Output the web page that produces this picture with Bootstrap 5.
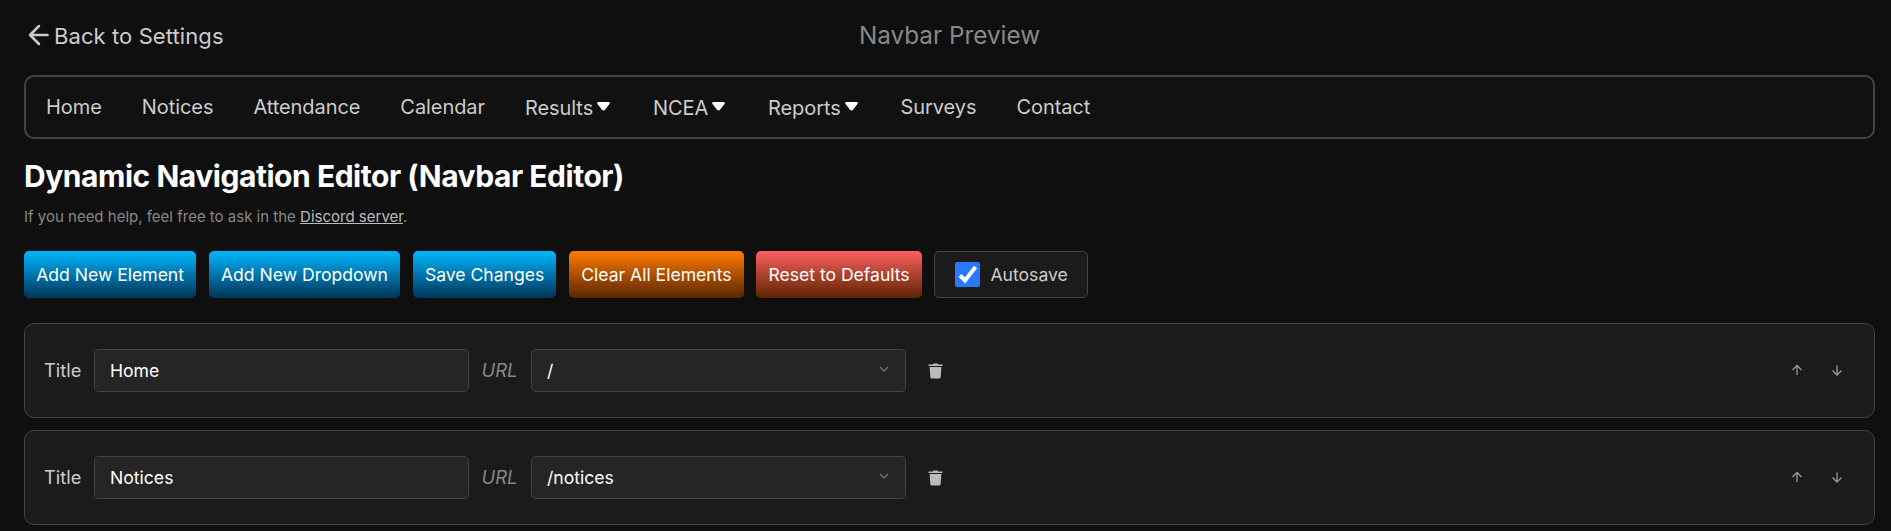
<!DOCTYPE html>
<html lang="en" data-bs-theme="dark">
<head>
<meta charset="utf-8">
<meta name="viewport" content="width=device-width, initial-scale=1">
<title>Navbar Editor</title>
<link rel="stylesheet" href="https://cdn.jsdelivr.net/npm/bootstrap@5.3.0/dist/css/bootstrap.min.css">
<style>
body{background:#0f0f0f;color:#ccc;font-family:Inter,"Liberation Sans",sans-serif;font-size:17.6px;line-height:1.5;overflow:hidden}
.page{padding:0 16px 0 24px}
.topbar{height:75px;padding-bottom:4px;display:grid;grid-template-columns:1fr auto 1fr}
.back-link{font-size:22px;letter-spacing:.09px;color:#ccc;padding:1px 0 0 4px;gap:5px}
.back-link svg{margin-top:-3px}
.preview-title{font-size:24.300px;color:#888}
.preview-nav{height:64px;border:2px solid #444;border-radius:10px;background:#111;padding:0 20px}
.preview-nav .nav{gap:40px}
.preview-nav a{font-size:20px;letter-spacing:-.07px;color:#ccc;padding:0;line-height:24px}
.preview-nav .drop{padding-top:2px;gap:4px;margin-right:2.800px}
.preview-nav .drop svg{margin-bottom:4px}
h1.editor-title{font-size:30px;font-weight:700;color:#fff;line-height:36px;margin:19px 0 0;letter-spacing:-.46px}
.help{font-size:15px;color:#888;line-height:20px;margin:13px 0 0}
.help a{color:#bbb}
.tools{gap:12.600px;margin-top:24px}
.tools .btn{height:47px;padding:2px 12.200px 0;border:0;border-radius:5px;color:#fff;font-size:17.6px;letter-spacing:-.02px;white-space:nowrap}
.btn-add{background:linear-gradient(#00b7ff,#003459)}
.btn-clear{background:linear-gradient(#ff7b00,#5c2500)}
.btn-reset{background:linear-gradient(#ff5f5f,#5c2500)}
.autosave{height:47px;width:154px;border:1px solid #444;border-radius:5px;background:#1b1b1b;padding-left:20px;gap:10px}
.autosave span{padding-top:2px}
.check-box{width:25px;height:25px;border-radius:2px;background:#2979ff}
.entries{gap:12px;margin-top:25px}
.entry{height:95px;border:1px solid #444;border-radius:10px;background:#1b1b1b;padding:0 20px 0 19px}
.lbl-title{width:50px;font-size:18.300px}
.lbl-url{width:62px;padding-left:12.500px;color:#888;font-style:italic;font-size:18.400px}
.entry .form-control,.entry .pick{width:375px;height:43px;background-color:#252525;border:1px solid #444;border-radius:5px;color:#fff;font-size:17.6px;padding:0 15px}
.pick span{padding-top:2px}
.pick svg{margin-top:-3px}
.trash{margin-left:22px}
.movers{margin-right:11px;gap:28px;margin-top:-1px}
</style>
</head>
<body>
<main class="page">
  <header class="topbar align-items-center">
    <a href="#" class="back-link d-flex align-items-center text-decoration-none">
      <svg width="21" height="22" viewBox="0 0 21 22" fill="none" stroke="#ccc" stroke-width="2.500" stroke-linecap="round" stroke-linejoin="round"><path d="M19.500 11H2.500M11 2 2 11l9 9"/></svg>
      <span>Back to Settings</span></a>
    <div class="preview-title">Navbar Preview</div>
  </header>
  <nav class="preview-nav d-flex align-items-center">
    <div class="nav flex-nowrap align-items-center">
      <a href="#" class="nav-link">Home</a>
      <a href="#" class="nav-link">Notices</a>
      <a href="#" class="nav-link">Attendance</a>
      <a href="#" class="nav-link">Calendar</a>
      <a href="#" class="nav-link drop d-flex align-items-center">Results<svg width="13" height="9" viewBox="0 0 13 9"><path fill="#fff" d="M1.500 0h10q2 .3 1 2L8 7.700q-1.500 1.600-3 0L.5 2q-1-1.700 1-2z"/></svg></a>
      <a href="#" class="nav-link drop d-flex align-items-center">NCEA<svg width="13" height="9" viewBox="0 0 13 9"><path fill="#fff" d="M1.500 0h10q2 .3 1 2L8 7.700q-1.500 1.600-3 0L.5 2q-1-1.700 1-2z"/></svg></a>
      <a href="#" class="nav-link drop d-flex align-items-center">Reports<svg width="13" height="9" viewBox="0 0 13 9"><path fill="#fff" d="M1.500 0h10q2 .3 1 2L8 7.700q-1.500 1.600-3 0L.5 2q-1-1.700 1-2z"/></svg></a>
      <a href="#" class="nav-link">Surveys</a>
      <a href="#" class="nav-link">Contact</a>
    </div>
  </nav>
  <h1 class="editor-title">Dynamic Navigation Editor (Navbar Editor)</h1>
  <p class="help">If you need help, feel free to ask in the <a href="#">Discord server</a>.</p>
  <div class="tools d-flex">
    <button class="btn btn-add">Add New Element</button>
    <button class="btn btn-add">Add New Dropdown</button>
    <button class="btn btn-add">Save Changes</button>
    <button class="btn btn-clear">Clear All Elements</button>
    <button class="btn btn-reset">Reset to Defaults</button>
    <label class="autosave d-flex align-items-center">
      <svg class="check-box" viewBox="0 0 25 25" fill="none" stroke="#fff" stroke-width="4"><path d="m5 13.500 5 5L20.500 5"/></svg>
      <span>Autosave</span></label>
  </div>
  <section class="entries d-flex flex-column">
    <div class="entry d-flex align-items-center">
      <span class="lbl-title">Title</span>
      <input class="form-control" value="Home">
      <span class="lbl-url">URL</span>
      <div class="pick d-flex align-items-center justify-content-between"><span>/</span><svg width="12" height="8" viewBox="0 0 12 8" fill="none" stroke="#707070" stroke-width="1.500"><path d="m2 2 4 4 4-4"/></svg></div>
      <svg class="trash" width="15" height="16" viewBox="0 0 14 16" preserveAspectRatio="none" fill="#bbb"><path d="M.5 1.500h4L5 .5h4l.5 1h4V3H.5zM1.500 4h11l-.7 10.200q-.2 1.300-1.300 1.300h-7q-1.100 0-1.300-1.300z"/></svg>
      <div class="movers d-flex ms-auto">
        <svg width="12" height="12" viewBox="0 0 12 12" fill="none" stroke="#999" stroke-width="1.300"><path d="M6 11V1.500M1.500 6 6 1.500 10.500 6"/></svg>
        <svg width="12" height="12" viewBox="0 0 12 12" fill="none" stroke="#999" stroke-width="1.300"><path d="M6 1.500V11M1.500 6.500 6 11l4.500-4.500"/></svg>
      </div>
    </div>
    <div class="entry d-flex align-items-center">
      <span class="lbl-title">Title</span>
      <input class="form-control" value="Notices">
      <span class="lbl-url">URL</span>
      <div class="pick d-flex align-items-center justify-content-between"><span>/notices</span><svg width="12" height="8" viewBox="0 0 12 8" fill="none" stroke="#707070" stroke-width="1.500"><path d="m2 2 4 4 4-4"/></svg></div>
      <svg class="trash" width="15" height="16" viewBox="0 0 14 16" preserveAspectRatio="none" fill="#bbb"><path d="M.5 1.500h4L5 .5h4l.5 1h4V3H.5zM1.500 4h11l-.7 10.200q-.2 1.300-1.300 1.300h-7q-1.100 0-1.300-1.300z"/></svg>
      <div class="movers d-flex ms-auto">
        <svg width="12" height="12" viewBox="0 0 12 12" fill="none" stroke="#999" stroke-width="1.300"><path d="M6 11V1.500M1.500 6 6 1.500 10.500 6"/></svg>
        <svg width="12" height="12" viewBox="0 0 12 12" fill="none" stroke="#999" stroke-width="1.300"><path d="M6 1.500V11M1.500 6.500 6 11l4.500-4.500"/></svg>
      </div>
    </div>
  </section>
</main>
<script src="https://cdn.jsdelivr.net/npm/bootstrap@5.3.0/dist/js/bootstrap.bundle.min.js"></script>
</body>
</html>
